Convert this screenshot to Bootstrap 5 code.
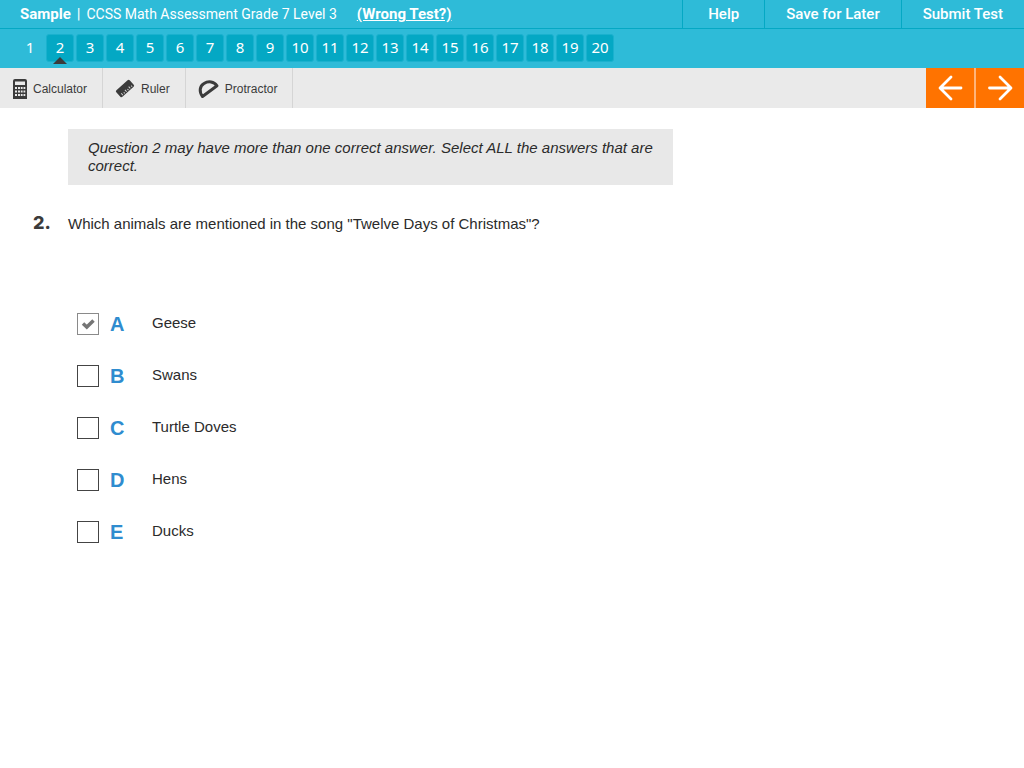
<!DOCTYPE html>
<html lang="en">
<head>
<meta charset="utf-8">
<meta name="viewport" content="width=device-width, initial-scale=1">
<title>CCSS Math Assessment Grade 7 Level 3</title>
<link href="https://cdn.jsdelivr.net/npm/bootstrap@5.3.0/dist/css/bootstrap.min.css" rel="stylesheet">
<style>
  body { font-family: "Liberation Sans", Arial, sans-serif; font-size: 15px; line-height: 18px; color: #2b2b2b; background: #fff; }
  .masthead { background: #2ebbd8; font-family: Roboto, sans-serif; color: #fff; }
  .title-row { border-bottom: 1px solid #04a8c4; line-height: 28px; }
  .title-row a { color: #fff; margin-left: 20px; }
  .divider { margin: 0 6px; }
  .test-name { font-size: 14px; }
  .top-action { border: 0; border-left: 1px solid #04a8c4; background: none; color: #fff; padding: 0 21px; font-weight: 500; }
  .top-action.narrow { padding: 0 25px; }
  .question-nav { gap: 2px; padding: 5px 16px 6px; }
  .q-tile { width: 28px; height: 28px; border: 1px solid #1ab1ce; border-radius: 3px; background: #04a8c4; color: #fff; font: 15px/24px "Noto Sans", sans-serif; text-align: center; text-decoration: none; }
  .q-tile.done { background: none; border-color: transparent; }
  .q-tile.current::after { content: ""; position: absolute; left: 50%; bottom: -3px; margin-left: -7px; border: 7px solid transparent; border-top: 0; border-bottom-color: #3b3b3b; }
  .toolbar { background: #eaeaea; height: 40px; }
  .tool { border: 0; border-right: 1px solid #d5d5d5; background: none; color: #3b3b3b; font-size: 12px; padding: 2px 15px 0 12px; gap: 5px; }
  .step { width: 48px; border: 0; background: #ff7300; color: #fff; }
  .steps { gap: 2px; background: #ffb47a; }
  .content { padding: 21px 33px 0; }
  .indent { margin-left: 35px; }
  .notice { max-width: 605px; background: #e8e8e8; padding: 10px 18px 10px 20px; margin-bottom: 28px; font-style: italic; }
  .q-number { width: 35px; font: 800 18px/20px Inter, sans-serif; color: #3b3b3b; }
  .answers { margin: 80px 0 0 44px; gap: 30px; }
  .answer-text { line-height: 16px; }
  .tick { appearance: none; width: 22px; height: 22px; margin: 0; border: 1px solid #444; background: #fff center/100% no-repeat; }
  .tick:checked { border-color: #8a8a8a; background-image: url("data:image/svg+xml,%3Csvg xmlns='http://www.w3.org/2000/svg' viewBox='0 0 20 20'%3E%3Cpath d='M5 9.500L8.800 13L15.500 6.500' fill='none' stroke='%23757575' stroke-width='3.500'/%3E%3C/svg%3E"); }
  .letter { width: 53px; padding-left: 11px; font-size: 20px; font-weight: 700; color: #2f8ccf; }
</style>
</head>
<body>
<header class="masthead">
  <div class="title-row d-flex justify-content-between">
    <div class="d-flex ps-3 ms-1">
      <strong>Sample</strong><span class="divider">|</span><span class="test-name">CCSS Math Assessment Grade 7 Level 3</span>
      <a class="fw-bold" href="#">(Wrong Test?)</a>
    </div>
    <div class="d-flex">
      <button type="button" class="top-action narrow">Help</button>
      <button type="button" class="top-action">Save for Later</button>
      <button type="button" class="top-action">Submit Test</button>
    </div>
  </div>
  <nav class="question-nav d-flex" aria-label="Questions">
    <a class="q-tile done" href="#">1</a>
    <a class="q-tile current position-relative" href="#" aria-current="page">2</a>
    <a class="q-tile" href="#">3</a>
    <a class="q-tile" href="#">4</a>
    <a class="q-tile" href="#">5</a>
    <a class="q-tile" href="#">6</a>
    <a class="q-tile" href="#">7</a>
    <a class="q-tile" href="#">8</a>
    <a class="q-tile" href="#">9</a>
    <a class="q-tile" href="#">10</a>
    <a class="q-tile" href="#">11</a>
    <a class="q-tile" href="#">12</a>
    <a class="q-tile" href="#">13</a>
    <a class="q-tile" href="#">14</a>
    <a class="q-tile" href="#">15</a>
    <a class="q-tile" href="#">16</a>
    <a class="q-tile" href="#">17</a>
    <a class="q-tile" href="#">18</a>
    <a class="q-tile" href="#">19</a>
    <a class="q-tile" href="#">20</a>
  </nav>
</header>
<div class="toolbar d-flex justify-content-between">
  <div class="d-flex">
    <button type="button" class="tool d-flex align-items-center">
      <svg width="16" height="20" viewBox="0 0 16 20" aria-hidden="true"><path fill="#3b3b3b" fill-rule="evenodd" d="M3 0H13Q15 0 15 2V20H1V2Q1 0 3 0ZM3 2.500V6H13V2.500ZM3 8V10H5V8ZM6 8V10H8V8ZM8.800 8V10H10.600V8ZM11.500 8V10H13.300V8ZM3 11.500V13.500H5V11.500ZM6 11.500V13.500H8V11.500ZM8.800 11.500V13.500H10.600V11.500ZM11.500 11.500V13.500H13.300V11.500ZM3 15V17H5V15ZM6 15V17H8V15ZM8.800 15V17H10.600V15ZM11.500 15V17H13.300V15Z"/></svg>
      <span>Calculator</span>
    </button>
    <button type="button" class="tool d-flex align-items-center">
      <svg width="21" height="20" viewBox="0 0 21 20" aria-hidden="true"><g transform="rotate(-42 10 9.500)"><rect x="1" y="5" width="18" height="9" rx="1.500" fill="#3b3b3b"/><path d="M4 10.500V13M6.500 11.500V13M9 10.500V13M11.500 11.500V13M14 10.500V13M16.500 11.500V13" stroke="#d5d5d5" stroke-width="1"/></g></svg>
      <span>Ruler</span>
    </button>
    <button type="button" class="tool d-flex align-items-center">
      <svg width="22" height="20" viewBox="0 0 22 20" aria-hidden="true"><path d="M4.500 17.500C1 13 1.500 7 6 4.500C10.500 1.500 16 2.500 19 6.800Z" fill="none" stroke="#3b3b3b" stroke-width="3" stroke-linejoin="round"/></svg>
      <span>Protractor</span>
    </button>
  </div>
  <div class="steps d-flex">
    <button type="button" class="step p-0" aria-label="Previous question"><svg width="26" height="26" viewBox="0 0 26 26" fill="none" stroke="#fff" stroke-width="2.800" stroke-linecap="round" stroke-linejoin="round" aria-hidden="true"><path d="M24 13H3.500M14 2L3 13L14 24"/></svg></button>
    <button type="button" class="step p-0" aria-label="Next question"><svg width="26" height="26" viewBox="0 0 26 26" fill="none" stroke="#fff" stroke-width="2.800" stroke-linecap="round" stroke-linejoin="round" aria-hidden="true"><path d="M2.500 13H23M13 2L24 13L13 24"/></svg></button>
  </div>
</div>
<main class="content">
  <div class="indent"><p class="notice">Question 2 may have more than one correct answer. Select ALL the answers that are correct.</p></div>
  <div class="d-flex align-items-end">
    <div class="q-number">2.</div>
    <div id="prompt">Which animals are mentioned in the song "Twelve Days of Christmas"?</div>
  </div>
  <div class="answers d-flex flex-column" role="group" aria-labelledby="prompt">
    <div class="d-flex align-items-center"><input class="tick" type="checkbox" id="a" checked><label class="d-flex" for="a"><span class="letter">A</span><span class="answer-text">Geese</span></label></div>
    <div class="d-flex align-items-center"><input class="tick" type="checkbox" id="b"><label class="d-flex" for="b"><span class="letter">B</span><span class="answer-text">Swans</span></label></div>
    <div class="d-flex align-items-center"><input class="tick" type="checkbox" id="c"><label class="d-flex" for="c"><span class="letter">C</span><span class="answer-text">Turtle Doves</span></label></div>
    <div class="d-flex align-items-center"><input class="tick" type="checkbox" id="d"><label class="d-flex" for="d"><span class="letter">D</span><span class="answer-text">Hens</span></label></div>
    <div class="d-flex align-items-center"><input class="tick" type="checkbox" id="e"><label class="d-flex" for="e"><span class="letter">E</span><span class="answer-text">Ducks</span></label></div>
  </div>
</main>
<script src="https://cdn.jsdelivr.net/npm/bootstrap@5.3.0/dist/js/bootstrap.bundle.min.js"></script>
</body>
</html>
